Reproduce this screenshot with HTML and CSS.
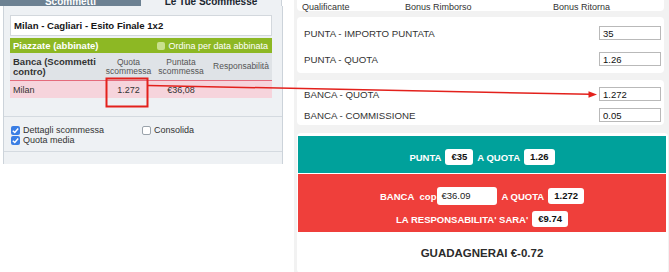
FILE: index.html
```html
<!DOCTYPE html>
<html lang="it">
<head>
    <meta charset="UTF-8">
    <meta name="viewport" content="width=device-width, initial-scale=1.0">
    <title>Calcolatore - Milan Cagliari</title>
    <link rel="stylesheet" href="styles.css">
</head>
<body>
    <!-- screenshot exchange -->
    <div class="left">
        <div class="tabs">
            <div class="tab tab-on">Scommetti</div>
            <div class="tab">Le Tue Scommesse</div>
        </div>
        <div class="panel">
            <div class="bets">
                <div class="match">Milan - Cagliari - Esito Finale 1x2</div>
                <div class="greenbar">
                    <span>Piazzate (abbinate)</span>
                    <span class="order"><span class="gbox"></span>Ordina per data abbinata</span>
                </div>
                <div class="thead">
                    <div class="first">Banca (Scommetti contro)</div>
                    <div>Quota scommessa</div>
                    <div>Puntata scommessa</div>
                    <div>Responsabilità</div>
                </div>
                <div class="trow">
                    <div class="first">Milan</div>
                    <div>1.272</div>
                    <div>€36,08</div>
                    <div></div>
                </div>
            </div>
            <div class="options">
                <label class="opt"><span class="cb on"><svg viewBox="0 0 10 10"><path d="M2 5.2 L4.2 7.3 L8 2.8" /></svg></span>Dettagli scommessa</label>
                <label class="opt"><span class="cb"></span>Consolida</label>
                <label class="opt"><span class="cb on"><svg viewBox="0 0 10 10"><path d="M2 5.2 L4.2 7.3 L8 2.8" /></svg></span>Quota media</label>
            </div>
            <div class="foot"></div>
        </div>
    </div>

    <!-- calcolatore -->
    <div class="right">
        <div class="card card-head">
            <span>Qualificante</span>
            <span>Bonus Rimborso</span>
            <span>Bonus Ritorna</span>
        </div>
        <div class="card card-form">
            <div class="field"><span>PUNTA - IMPORTO PUNTATA</span><input type="text" value="35"></div>
            <div class="field"><span>PUNTA - QUOTA</span><input type="text" value="1.26"></div>
        </div>
        <div class="card card-form card-banca">
            <div class="field"><span>BANCA - QUOTA</span><input type="text" value="1.272"></div>
            <div class="field"><span>BANCA - COMMISSIONE</span><input type="text" value="0.05"></div>
        </div>
        <div class="card card-result">
            <div class="punta">
                <span>PUNTA</span><span class="badge">€35</span>
                <span>A QUOTA</span><span class="badge">1.26</span>
            </div>
            <div class="banca">
                <div class="line">
                    <span>BANCA&nbsp; cop</span><span class="stake">€36.09</span>
                    <span>A QUOTA</span><span class="badge">1.272</span>
                </div>
                <div class="line">
                    <span>LA RESPONSABILITA' SARA'</span><span class="badge">€9.74</span>
                </div>
            </div>
            <div class="guad">GUADAGNERAI €-0.72</div>
        </div>
    </div>

    <!-- evidenziazione sopra l'immagine -->
    <svg class="overlay" viewBox="0 0 669 272">
        <rect x="106.5" y="78.5" width="41" height="28" fill="none" stroke="#e3211c" stroke-width="2"/>
        <line x1="148" y1="85.5" x2="590" y2="94.3" stroke="#e3211c" stroke-width="1.5"/>
        <polygon points="597,94.6 588.5,91.2 588.5,97.8" fill="#e3211c"/>
    </svg>
</body>
</html>
```

FILE: styles.css
```css
* {
    box-sizing: border-box;
}
body {
    margin: 0;
    width: 669px;
    height: 272px;
    overflow: hidden;
    background: #fff;
    display: flex;
    align-items: flex-start;
    position: relative;
    font-family: "Liberation Sans", Arial, sans-serif;
}

/* pannello exchange */
.left {
    width: 283px;
    flex: none;
}
.tabs {
    display: flex;
    height: 12px;
    margin-top: -6px;
}
.tab {
    width: 141px;
    height: 12px;
    overflow: hidden;
    padding-top: 2px;
    text-align: center;
    font-weight: bold;
    font-size: 10px;
    line-height: 12px;
    color: #1c2730;
    background: #eef1f4;
    border-right: 1px solid #ccd3da;
}
.tab-on {
    background: #6c8192;
    color: #fff;
    border-right: none;
}
.panel {
    margin-left: 3px;
    width: 280px;
    height: 158px;
    overflow: hidden;
    background: #eef1f4;
    border-left: 1px solid #ccd3da;
    border-right: 1px solid #ccd3da;
}
.bets {
    padding: 9px 10px 0 6px;
}
.match {
    height: 21px;
    background: #fff;
    border: 1px solid #d3d8dd;
    padding-left: 3px;
    font-weight: bold;
    font-size: 9.6px;
    line-height: 19px;
    color: #151515;
}
.greenbar {
    margin-top: 2px;
    height: 15px;
    background: #8db824;
    color: #fff;
    display: flex;
    justify-content: space-between;
    align-items: center;
    padding: 0 4px 0 3px;
    font-weight: bold;
    font-size: 9.5px;
}
.order {
    display: flex;
    align-items: center;
    gap: 3px;
    font-weight: normal;
    font-size: 9px;
}
.gbox {
    width: 8px;
    height: 8px;
    border-radius: 2px;
    background: #c9e08e;
}
.thead,
.trow {
    display: grid;
    grid-template-columns: 95px 47px 58px 62px;
    align-items: center;
    text-align: center;
}
.thead {
    height: 28px;
    background: #dfe3e7;
    border-bottom: 1px solid #e46b7c;
    font-size: 8.5px;
    line-height: 9px;
    color: #555;
}
.thead .first {
    text-align: left;
    padding-left: 3px;
    font-weight: bold;
    font-size: 9.5px;
    line-height: 10px;
    color: #333;
}
.trow {
    height: 17px;
    background: #f6d4dc;
    font-size: 9px;
    color: #333;
}
.trow .first {
    text-align: left;
    padding-left: 3px;
}
.options {
    margin-top: 18px;
    height: 36px;
    border-top: 1px solid #d4dae0;
    border-bottom: 1px solid #d4dae0;
    padding: 8px 0 0 7px;
    display: grid;
    grid-template-columns: 131px 1fr;
    grid-auto-rows: 10px;
}
.opt {
    display: flex;
    align-items: center;
    gap: 3px;
    font-size: 9px;
    line-height: 10px;
    color: #333;
}
.cb {
    width: 9px;
    height: 9px;
    border-radius: 2px;
    border: 1px solid #9aa3ab;
    background: #fff;
}
.cb.on {
    border: none;
    background: #3a7ee4;
}
.cb svg {
    display: block;
    width: 9px;
    height: 9px;
    fill: none;
    stroke: #fff;
    stroke-width: 1.6;
}

/* calcolatore */
.right {
    flex: 1;
    height: 272px;
    margin-left: 11px;
    padding-left: 3px;
    background: #f2f2f2;
}
.card {
    background: #fff;
    border-radius: 4px;
}
.card-head {
    height: 11px;
    margin-right: 5px;
    border-radius: 0 0 4px 4px;
    padding-left: 5px;
    display: grid;
    grid-template-columns: 103px 148px 1fr;
    font-size: 9px;
    line-height: 14px;
    color: #333;
}
.card-form {
    margin: 6px 5px 0 0;
    height: 56px;
    padding: 9px 3px 0 7px;
    display: flex;
    flex-direction: column;
    gap: 12px;
}
.card-banca {
    margin-top: 7px;
    height: 45px;
    padding-top: 7px;
    gap: 7px;
}
.field {
    height: 14px;
    display: flex;
    justify-content: space-between;
    align-items: center;
    font-size: 9.7px;
    color: #333;
}
.field input {
    width: 62px;
    height: 14px;
    padding: 0 3px;
    border: 1px solid #b9b9b9;
    border-radius: 0;
    font-family: "Liberation Sans", Arial, sans-serif;
    font-size: 9.5px;
    color: #111;
}
.card-result {
    margin: 8px 1px 0 0;
    height: 140px;
    padding: 3px 2px 0 1px;
}
.punta,
.banca .line {
    display: flex;
    justify-content: center;
    align-items: center;
    gap: 4px;
    color: #fff;
    font-weight: bold;
    font-size: 9.5px;
}
.punta {
    height: 37px;
    padding-top: 5px;
    background: #00a19b;
}
.banca {
    margin-top: 1px;
    height: 58px;
    padding-top: 13px;
    background: #ef3f3b;
    display: flex;
    flex-direction: column;
    align-items: center;
    gap: 6px;
}
.badge {
    height: 16px;
    line-height: 16px;
    padding: 0 6px;
    border-radius: 3px;
    background: #fff;
    color: #111;
}
.stake {
    width: 60px;
    height: 18px;
    line-height: 18px;
    margin-left: -3px;
    padding-left: 4px;
    border-radius: 3px;
    background: #fff;
    color: #222;
    font-weight: normal;
}
.guad {
    padding-top: 14px;
    text-align: center;
    font-weight: bold;
    font-size: 11.5px;
    line-height: 14px;
    color: #2b2b2b;
}

.overlay {
    position: absolute;
    left: 0;
    top: 0;
    width: 669px;
    height: 272px;
    pointer-events: none;
}
```
